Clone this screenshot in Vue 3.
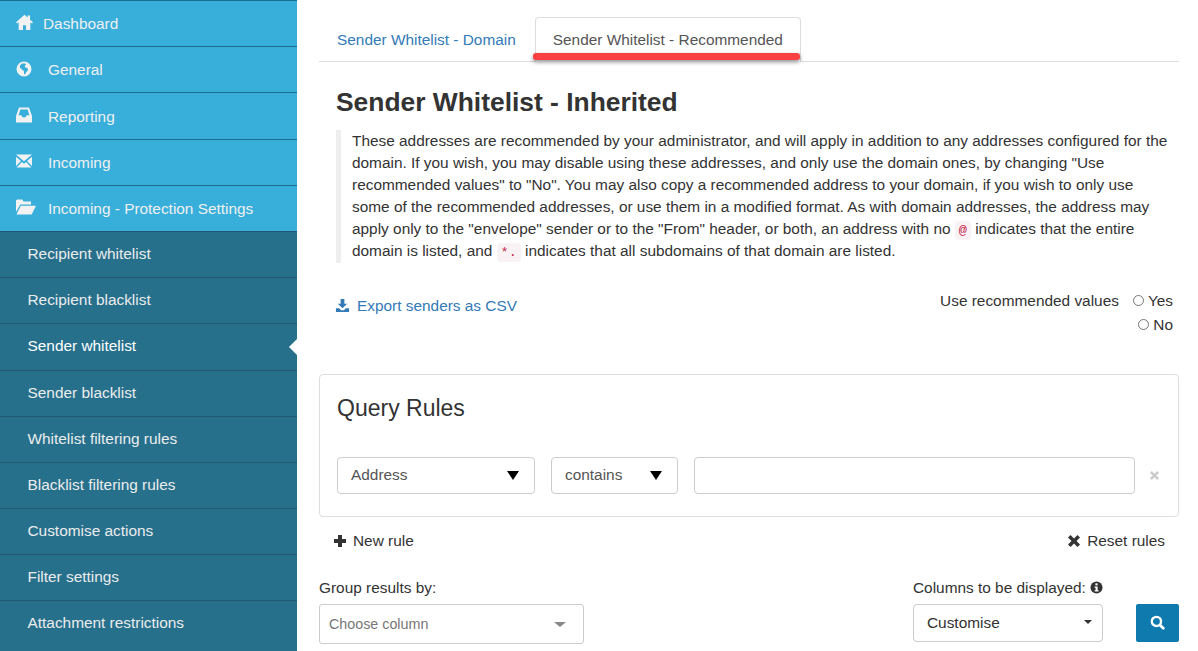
<template>
  <div class="page">
    <aside class="sidebar">
      <a v-for="item in topItems" :key="item.label" class="nav-item">
        <svg class="nav-icon" :class="item.cls" viewBox="0 0 16 16" v-html="item.icon"></svg>
        <span>{{ item.label }}</span>
      </a>
      <a
        v-for="item in subItems"
        :key="item"
        class="sub-item"
        :class="{ 'sub-item--active': item === 'Sender whitelist' }"
      >{{ item }}</a>
    </aside>

    <main class="content">
      <div class="tabs">
        <a class="tab">Sender Whitelist - Domain</a>
        <a class="tab tab--active">Sender Whitelist - Recommended<i class="tab__mark"></i></a>
      </div>

      <div class="inner">
        <h1>Sender Whitelist - Inherited</h1>
        <blockquote>
          These addresses are recommended by your administrator, and will apply in addition to any addresses configured for the domain. If you wish, you may disable using these addresses, and only use the domain ones, by changing "Use recommended values" to "No". You may also copy a recommended address to your domain, if you wish to only use some of the recommended addresses, or use them in a modified format. As with domain addresses, the address may apply only to the "envelope" sender or to the "From" header, or both, an address with no <code>@</code> indicates that the entire domain is listed, and <code>*.</code> indicates that all subdomains of that domain are listed.
        </blockquote>

        <div class="options">
          <a class="export">
            <svg viewBox="0 0 16 16" width="15" height="15">
              <path fill="#337ab7" d="M6 1h4v5h3l-5 5-5-5h3zM1 11h3.5l2 2h3l2-2H15v4H1z" />
            </svg>
            Export senders as CSV
          </a>
          <div class="recommended">
            <span class="recommended__label">Use recommended values</span>
            <div class="radios">
              <label><i class="radio"></i>Yes</label>
              <label><i class="radio"></i>No</label>
            </div>
          </div>
        </div>
      </div>

      <section class="panel">
        <h2>Query Rules</h2>
        <div class="rule">
          <div class="select select--field">Address<i class="arrow"></i></div>
          <div class="select select--op">contains<i class="arrow"></i></div>
          <div class="select select--value"></div>
          <svg class="rule__remove" viewBox="0 0 12 12" width="11" height="11">
            <path fill="#ccc" d="M1 3l2-2 3 3 3-3 2 2-3 3 3 3-2 2-3-3-3 3-2-2 3-3z" />
          </svg>
        </div>
      </section>

      <div class="actions">
        <a>
          <svg viewBox="0 0 14 14" width="14" height="14">
            <path fill="#333" d="M5 1h4v4h4v4H9v4H5V9H1V5h4z" />
          </svg>
          New rule
        </a>
        <a>
          <svg viewBox="0 0 14 14" width="14" height="14">
            <path fill="#333" d="M1 3.5L3.5 1 7 4.5 10.5 1 13 3.5 9.500 7 13 10.500 10.500 13 7 9.500 3.500 13 1 10.500 4.500 7z" />
          </svg>
          Reset rules
        </a>
      </div>

      <div class="filters">
        <div class="group">
          <label>Group results by:</label>
          <div class="choose">Choose column<i class="caret caret--grey"></i></div>
        </div>
        <div class="columns">
          <label>
            Columns to be displayed:
            <svg viewBox="0 0 14 14" width="13" height="13">
              <circle cx="7" cy="7" r="6.500" fill="#333" />
              <rect x="5.800" y="2.500" width="2.400" height="2.200" fill="#fff" />
              <path fill="#fff" d="M5 6h3.200v4H9.200v1.300H5V10h1V7.300H5z" />
            </svg>
          </label>
          <div class="customise">Customise<i class="caret"></i></div>
        </div>
        <button class="search" type="button">
          <svg viewBox="0 0 14 14" width="15" height="15">
            <circle cx="6" cy="6" r="4.300" fill="none" stroke="#fff" stroke-width="2.200" />
            <path stroke="#fff" stroke-width="2.600" stroke-linecap="round" d="M9.500 9.500L12.400 12.400" />
          </svg>
        </button>
      </div>
    </main>
  </div>
</template>

<script setup>
const topItems = [
  {
    label: 'Dashboard',
    cls: 'nav-icon--home',
    icon: '<path fill="#f2f2f2" d="M8 .6L0 7.800l1 1.100L2.500 7.700V15h4.100v-4.500h2.800V15h4.100V7.700L15 8.900l1-1.100-2.800-2.500V1.500h-2.200v1.800z"/>'
  },
  {
    label: 'General',
    icon: '<path fill="#f2f2f2" fill-rule="evenodd" d="M8 .5a7.500 7.500 0 1 0 0 15 7.500 7.500 0 0 0 0-15zM6 2.500h3.500l.5 1.500-1.500 1 1 1.500 2 .5.500 2-2 2.500-1 2-1-.5V10L6.500 9 5 7.500l-1-.5V4.500z"/>'
  },
  {
    label: 'Reporting',
    icon: '<path fill="#f2f2f2" fill-rule="evenodd" d="M3 .5h10L16 9v6.500H0V9zM4.400 2.500L2.600 8.200H5.400L6.400 10.300h3.200l1-2.100h2.800L11.600 2.500z"/>'
  },
  {
    label: 'Incoming',
    icon: '<path fill="#f2f2f2" d="M0 1.500h16L8 8.300zM0 3.800l5 4.300-5 5zM16 3.800v9.300l-5-5zM6 9l2 1.700L10 9l5.500 5.500H.5z"/>'
  },
  {
    label: 'Incoming - Protection Settings',
    cls: 'nav-icon--folder',
    icon: '<path fill="#f2f2f2" d="M0 2.500L1 2h4l1 1.500h6V6H3.500L0 12zM3.800 7H16l-3.500 7H.4z"/>'
  }
]

const subItems = [
  'Recipient whitelist',
  'Recipient blacklist',
  'Sender whitelist',
  'Sender blacklist',
  'Whitelist filtering rules',
  'Blacklist filtering rules',
  'Customise actions',
  'Filter settings',
  'Attachment restrictions'
]
</script>

<style>
html,
body {
  margin: 0;
  overflow: hidden;
  background: #fff;
}
</style>

<style scoped>
.page {
  display: flex;
  height: 651px;
  overflow: hidden;
  font-family: "Liberation Sans", Arial, sans-serif;
  font-size: 15.4px;
  color: #333;
}

.sidebar {
  flex: 0 0 297px;
  background: #26708c;
  overflow: hidden;
}

.nav-item {
  display: flex;
  align-items: center;
  box-sizing: border-box;
  height: 46.2px;
  padding: 1.2px 0 0 16px;
  background: #38aedb;
  border-top: 1px solid #1a6f8f;
  color: #f0f0f0;
}

.nav-item:first-child span {
  margin-left: -5px;
}

.nav-icon {
  flex: none;
  width: 16px;
  height: 16px;
  margin-right: 16px;
  margin-top: -3px;
}

.nav-icon--home {
  width: 17px;
  height: 17px;
  margin-right: 15px;
}

.nav-icon--folder {
  width: 20px;
  height: 20px;
  margin-right: 12px;
}

.sub-item {
  display: flex;
  align-items: center;
  box-sizing: border-box;
  height: 46.2px;
  padding: 0 0 1.2px 27.5px;
  border-top: 1px solid #1f5a72;
  color: #ececec;
  position: relative;
}

.sub-item--active {
  color: #fff;
}

.sub-item--active::after {
  content: "";
  position: absolute;
  right: 0;
  top: 15px;
  border: 8px solid transparent;
  border-left-width: 0;
  border-right-color: #fff;
}

.content {
  flex: 1;
  min-width: 0;
  padding: 0 19px 0 22px;
}

.tabs {
  display: flex;
  gap: 1px;
  height: 62px;
  box-sizing: border-box;
  padding-top: 17px;
  border-bottom: 1px solid #ddd;
}

.tab {
  position: relative;
  box-sizing: border-box;
  height: 45px;
  padding: 0 17px;
  line-height: 44px;
  color: #337ab7;
  border: 1px solid transparent;
  border-radius: 4px 4px 0 0;
}

.tab--active {
  color: #555;
  background: #fff;
  border-color: #ddd #ddd #fff;
}

.tab__mark {
  position: absolute;
  left: -3px;
  right: 0;
  bottom: 1px;
  height: 7px;
  background: #f94144;
  border-radius: 3px;
  box-shadow: 0 2px 4px rgba(0, 0, 0, 0.45);
}

.inner {
  padding: 0 0 0 17px;
}

h1 {
  margin: 25px 0 13px;
  font-size: 26.4px;
  line-height: 30px;
  font-weight: 700;
}

blockquote {
  margin: 0;
  padding: 0 9px 0 11px;
  border-left: 5px solid #eee;
  line-height: 22.1px;
  color: #333;
}

code {
  padding: 2px 4px;
  font-family: "Liberation Mono", monospace;
  font-size: 13.5px;
  line-height: 1;
  color: #c7254e;
  background: #f9f2f4;
  border-radius: 4px;
}

.options {
  display: flex;
  justify-content: space-between;
  height: 111px;
  padding-top: 29px;
  box-sizing: border-box;
}

.export {
  display: flex;
  align-items: center;
  gap: 7px;
  height: 28px;
  margin-left: -1px;
  color: #337ab7;
}

.recommended {
  display: flex;
  gap: 14px;
  padding-right: 6px;
}

.recommended__label {
  line-height: 18px;
}

.radios {
  display: flex;
  flex-direction: column;
  align-items: flex-end;
  gap: 6px;
}

.radios label {
  display: flex;
  align-items: center;
  height: 18px;
}

.radio {
  box-sizing: border-box;
  width: 11px;
  height: 11px;
  margin-right: 4px;
  border: 1px solid #767676;
  border-radius: 50%;
}

.panel {
  box-sizing: border-box;
  height: 143px;
  padding: 0 17px;
  border: 1px solid #ddd;
  border-radius: 4px;
}

h2 {
  margin: 19px 0 0;
  font-size: 23px;
  line-height: 28px;
  font-weight: 400;
}

.rule {
  display: flex;
  align-items: center;
  gap: 16px;
  margin-top: 35px;
}

.select {
  position: relative;
  box-sizing: border-box;
  height: 37px;
  padding-left: 13px;
  line-height: 33px;
  color: #555;
  border: 1px solid #ccc;
  border-radius: 4px;
}

.select--field {
  flex: 0 0 198px;
}

.select--op {
  flex: 0 0 127px;
}

.select--value {
  flex: 1;
}

.arrow {
  position: absolute;
  right: 15px;
  top: 13px;
  border-style: solid;
  border-width: 9px 6px 0;
  border-color: #000 transparent transparent;
}

.rule__remove {
  flex: none;
  margin: 0 1px 0 -2px;
}

.actions {
  display: flex;
  justify-content: space-between;
  padding: 15px 14px 0;
}

.actions a {
  display: flex;
  align-items: center;
  gap: 6px;
  height: 18px;
}

.filters {
  display: flex;
  align-items: flex-start;
  margin-top: 28px;
}

.filters label {
  display: flex;
  align-items: center;
  gap: 4px;
  height: 20px;
  margin-bottom: 6px;
  white-space: nowrap;
}

.group {
  flex: 0 0 265px;
  margin-right: 329px;
}

.choose {
  position: relative;
  box-sizing: border-box;
  height: 40px;
  padding-left: 9px;
  line-height: 38px;
  font-size: 14.3px;
  color: #777;
  border: 1px solid #ccc;
  border-radius: 3px;
}

.columns {
  flex: 0 0 190px;
  min-width: 0;
  margin-right: 33px;
}

.customise {
  position: relative;
  box-sizing: border-box;
  height: 38px;
  padding-left: 13px;
  line-height: 36px;
  color: #333;
  border: 1px solid #ccc;
  border-radius: 4px;
}

.caret {
  position: absolute;
  right: 10px;
  top: 15px;
  border-style: solid;
  border-width: 4px 4px 0;
  border-color: #333 transparent transparent;
}

.caret--grey {
  right: 17px;
  top: 17px;
  border-width: 5px 6px 0;
  border-color: #888 transparent transparent;
}

.search {
  flex: 0 0 43px;
  height: 38px;
  margin-top: 26px;
  padding: 0;
  background: #0f7aad;
  border: 0;
  border-radius: 2px;
}

.search svg {
  display: block;
  margin: 0 auto;
}
</style>
